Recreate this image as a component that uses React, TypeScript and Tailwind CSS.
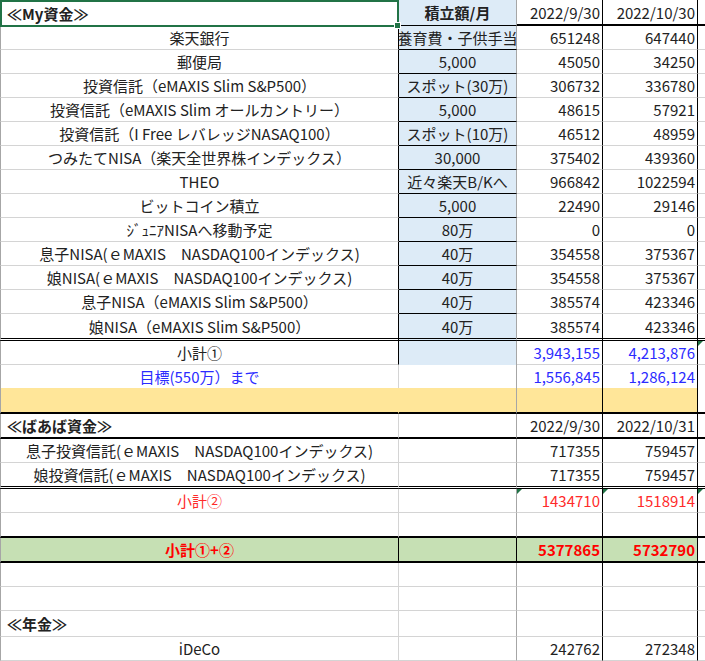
import React from 'react';

const gB = 'border-b border-b-[#d4d4d4]';
const kB = 'border-b border-b-black';
const tB = 'border-b-2 border-b-black';
const dB = 'border-b-[3px] border-double border-b-black';
const nB = '';
const gR = 'border-r border-r-[#d4d4d4]';
const mR = 'border-r border-r-[#a6a6a6]';
const kR = 'border-r border-r-black';
const yR = 'border-r border-r-[#ffe699]';

const BLUE = 'bg-[#ddebf7]';
const YEL = 'bg-[#ffe699]';
const GRN = 'bg-[#c6e0b4]';

interface Row {
  h: string;
  bA: string;
  bB: string;
  bR: string;
  rA: string;
  rB: string;
  rC: string;
  rD: string;
  bgA?: string;
  bgB?: string;
  bgC?: string;
  bgD?: string;
  a?: React.ReactNode;
  aCls?: string;
  b?: React.ReactNode;
  bCls?: string;
  c?: React.ReactNode;
  d?: React.ReactNode;
  cdCls?: string;
  triC?: boolean;
  triD?: boolean;
  triE?: boolean;
}

const std = (a: string, b: string, c: string, d: string): Row => ({
  h: 'h-[24px]',
  bA: gB,
  bB: kB,
  bR: gB,
  rA: kR,
  rB: mR,
  rC: kR,
  rD: kR,
  bgB: BLUE,
  a,
  b,
  c,
  d,
});

const plain = (h: string, bottom: string, a?: React.ReactNode, c?: string, d?: string, aCls?: string): Row => ({
  h,
  bA: bottom,
  bB: bottom,
  bR: bottom,
  rA: gR,
  rB: mR,
  rC: kR,
  rD: kR,
  a,
  aCls,
  c,
  d,
});

const r14 = std('娘NISA（eMAXIS Slim S&P500）', '40万', '385574', '423346');
r14.h = 'h-[27px]';
r14.bA = dB;
r14.bB = dB;
r14.bR = dB;

const rows: Row[] = [
  {
    h: 'h-[26px]',
    bA: nB,
    bB: kB,
    bR: tB,
    rA: kR,
    rB: mR,
    rC: kR,
    rD: kR,
    bgB: BLUE,
    a: '≪My資金≫',
    aCls: 'justify-start pl-[6px] font-bold',
    b: '積立額/月',
    bCls: 'font-bold',
    c: '2022/9/30',
    d: '2022/10/30',
  },
  std('楽天銀行', '養育費・子供手当', '651248', '647440'),
  std('郵便局', '5,000', '45050', '34250'),
  std('投資信託（eMAXIS Slim S&P500）', 'スポット(30万)', '306732', '336780'),
  std('投資信託（eMAXIS Slim オールカントリー）', '5,000', '48615', '57921'),
  std('投資信託（I Free レバレッジNASAQ100）', 'スポット(10万)', '46512', '48959'),
  std('つみたてNISA（楽天全世界株インデックス）', '30,000', '375402', '439360'),
  std('THEO', '近々楽天B/Kへ', '966842', '1022594'),
  std('ビットコイン積立', '5,000', '22490', '29146'),
  std('ｼﾞｭﾆｱNISAへ移動予定', '80万', '0', '0'),
  std('息子NISA(ｅMAXIS　NASDAQ100インデックス)', '40万', '354558', '375367'),
  std('娘NISA(ｅMAXIS　NASDAQ100インデックス)', '40万', '354558', '375367'),
  std('息子NISA（eMAXIS Slim S&P500）', '40万', '385574', '423346'),
  r14,
  {
    h: 'h-[24px]',
    bA: gB,
    bB: nB,
    bR: gB,
    rA: kR,
    rB: mR,
    rC: kR,
    rD: kR,
    bgB: BLUE,
    a: '小計①',
    c: '3,943,155',
    d: '4,213,876',
    cdCls: 'text-[#2b2bff]',
    triE: true,
  },
  {
    h: 'h-[23px]',
    bA: nB,
    bB: nB,
    bR: nB,
    rA: gR,
    rB: mR,
    rC: kR,
    rD: kR,
    a: '目標(550万）まで',
    aCls: 'justify-center text-[#2b2bff]',
    c: '1,556,845',
    d: '1,286,124',
    cdCls: 'text-[#2b2bff]',
  },
  {
    h: 'h-[26px]',
    bA: tB,
    bB: tB,
    bR: tB,
    rA: yR,
    rB: mR,
    rC: kR,
    rD: kR,
    bgA: YEL,
    bgB: YEL,
    bgC: YEL,
    bgD: YEL,
  },
  plain('h-[25px]', tB, '≪ばあば資金≫', '2022/9/30', '2022/10/31', 'justify-start pl-[6px] font-bold'),
  plain('h-[24px]', gB, '息子投資信託(ｅMAXIS　NASDAQ100インデックス)', '717355', '759457'),
  plain('h-[26px]', dB, '娘投資信託(ｅMAXIS　NASDAQ100インデックス)', '717355', '759457'),
  {
    ...plain('h-[24px]', gB, '小計②', '1434710', '1518914', 'justify-center text-[#ff2a2a]'),
    cdCls: 'text-[#ff2a2a]',
    triC: true,
    triD: true,
    triE: true,
  },
  plain('h-[25px]', tB),
  {
    h: 'h-[25px]',
    bA: tB,
    bB: tB,
    bR: tB,
    rA: kR,
    rB: kR,
    rC: kR,
    rD: kR,
    bgA: GRN,
    bgB: GRN,
    bgC: GRN,
    bgD: GRN,
    a: '小計①+②',
    aCls: 'justify-center font-bold text-[#ff0000]',
    c: '5377865',
    d: '5732790',
    cdCls: 'font-bold text-[#ff0000]',
  },
  plain('h-[24px]', gB),
  plain('h-[24px]', gB),
  plain('h-[26px]', gB, '≪年金≫', undefined, undefined, 'justify-start pl-[6px] font-bold'),
  plain('h-[24px]', gB, 'iDeCo', '242762', '272348'),
];

function Tri() {
  return (
    <div className="absolute left-0 top-0 w-0 h-0 border-t-[5px] border-t-[#217346] border-r-[5px] border-r-transparent" />
  );
}

function SheetRow({ r }: { r: Row }) {
  return (
    <div className={`flex ${r.h}`}>
      <div
        className={`w-[399px] shrink-0 h-full flex items-center overflow-hidden whitespace-nowrap border-l border-l-[#a6a6a6] ${r.rA} ${r.bA} ${r.bgA ?? ''} ${r.aCls ?? 'justify-center'}`}
      >
        <span className="shrink-0 leading-[18px] pt-[1px]">{r.a}</span>
      </div>
      <div
        className={`w-[118px] shrink-0 h-full flex items-center justify-center overflow-hidden whitespace-nowrap ${r.rB} ${r.bB} ${r.bgB ?? ''} ${r.bCls ?? ''}`}
      >
        <span className="shrink-0 leading-[18px] pt-[1px]">{r.b}</span>
      </div>
      <div
        className={`relative w-[86px] shrink-0 h-full flex items-center justify-end pr-[2px] overflow-hidden whitespace-nowrap ${r.rC} ${r.bR} ${r.bgC ?? ''} ${r.cdCls ?? ''}`}
      >
        {r.triC && <Tri />}
        <span className="shrink-0 leading-[18px] pt-[1px]">{r.c}</span>
      </div>
      <div
        className={`relative w-[95px] shrink-0 h-full flex items-center justify-end pr-[2px] overflow-hidden whitespace-nowrap ${r.rD} ${r.bR} ${r.bgD ?? ''} ${r.cdCls ?? ''}`}
      >
        {r.triD && <Tri />}
        <span className="shrink-0 leading-[18px] pt-[1px]">{r.d}</span>
      </div>
      <div className={`relative w-[7px] shrink-0 h-full ${r.bR}`}>{r.triE && <Tri />}</div>
    </div>
  );
}

export default function App() {
  return (
    <div className="relative w-[705px] h-[661px] overflow-hidden bg-white text-[15px] text-[#222222] font-['Noto_Sans_CJK_JP','Noto_Sans',sans-serif]">
      {rows.map((r, i) => (
        <SheetRow key={i} r={r} />
      ))}
      <div className="absolute left-0 top-0 w-[399px] h-[27px] border-2 border-[#217346]" />
      <div className="absolute left-[394px] top-[22px] w-[7px] h-[7px] bg-[#217346] border border-white" />
    </div>
  );
}
